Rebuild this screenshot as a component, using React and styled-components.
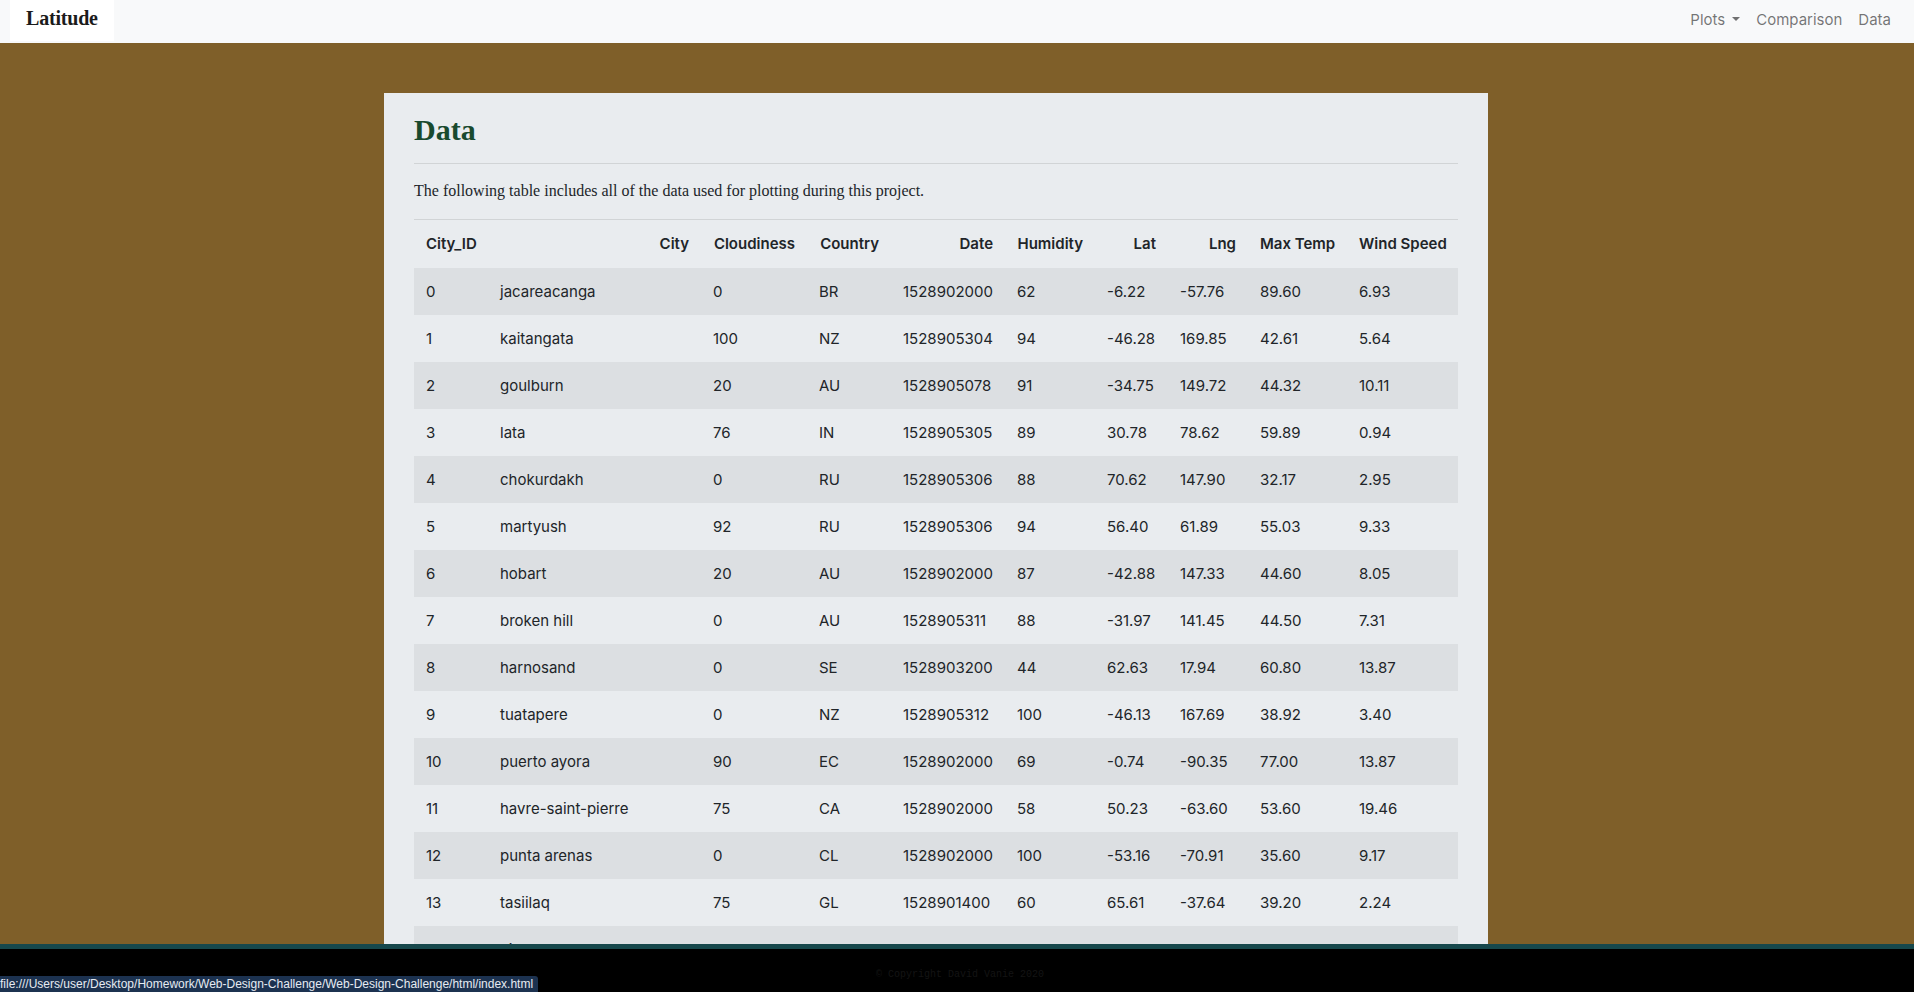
import React from 'react';
import styled, { createGlobalStyle } from 'styled-components';

const GlobalStyle = createGlobalStyle`
    html, body {
        margin: 0;
        padding: 0;
    }
    body {
        background: #7f5f29;
        font-family: Inter, "Noto Sans", sans-serif;
        color: #212529;
    }
`;

const Navbar = styled.nav`
    height: 43px;
    background: #f8f9fa;
    display: flex;
    align-items: stretch;
    justify-content: space-between;
    padding: 0 10px;
`;

const Brand = styled.a`
    display: flex;
    align-items: center;
    height: 41px;
    box-sizing: border-box;
    padding: 0 16px 4px;
    background: #ffffff;
    font-family: "Liberation Serif", serif;
    font-weight: bold;
    font-size: 20px;
    color: #1b1b1b;
    text-decoration: none;
    letter-spacing: -0.2px;
`;

const NavLinks = styled.ul`
    list-style: none;
    margin: 0;
    padding: 0 5px 5px 0;
    display: flex;
    align-items: center;
`;

const NavItem = styled.li`
    font-size: 15px;
    color: rgba(0, 0, 0, 0.55);
    padding: 0 8px;
    display: flex;
    align-items: center;
`;

const Caret = styled.span`
    display: inline-block;
    margin-left: 7px;
    border-top: 4.5px solid rgba(0, 0, 0, 0.55);
    border-left: 4px solid transparent;
    border-right: 4px solid transparent;
`;

const Main = styled.main`
    display: flex;
    justify-content: center;
    padding: 50px 42px 60px 0;
`;

const Jumbotron = styled.section`
    width: 1104px;
    box-sizing: border-box;
    background: #e9ecef;
    padding: 19px 30px 30px;
`;

const Heading = styled.h1`
    margin: 0;
    font-family: "Liberation Serif", serif;
    font-weight: bold;
    font-size: 30px;
    line-height: 36px;
    color: #194a2e;
`;

const Rule = styled.hr`
    margin: ${p => p.$top}px 0 0;
    border: 0;
    border-top: 1px solid rgba(0, 0, 0, 0.1);
`;

const Lead = styled.p`
    margin: 15px 0 16px;
    font-family: "Liberation Serif", serif;
    font-size: 16px;
    line-height: 24px;
`;

const Table = styled.table`
    width: 100%;
    table-layout: fixed;
    border-collapse: collapse;
    font-size: 15px;
`;

const Th = styled.th`
    text-align: ${p => (p.$left ? 'left' : 'right')};
    font-weight: 600;
    padding: 12px;
    line-height: 24px;
    white-space: nowrap;
`;

const Row = styled.tr`
    background: ${p => (p.$striped ? '#dcdfe2' : 'transparent')};
`;

const Td = styled.td`
    text-align: left;
    padding: 12px 12px 11px;
    line-height: 24px;
    white-space: nowrap;
`;

const Footer = styled.footer`
    position: fixed;
    left: 0;
    right: 0;
    bottom: 0;
    height: 43px;
    background: #000;
    border-top: 5px solid #17484c;
    display: flex;
    align-items: center;
    justify-content: center;
`;

const Copyright = styled.span`
    font-family: "Liberation Mono", monospace;
    font-size: 10px;
    color: #141414;
    margin-left: 6px;
    margin-top: 8px;
`;

const StatusBar = styled.div`
    position: fixed;
    left: 0;
    bottom: 0;
    height: 16px;
    padding: 0 5px 0 0;
    background: #1c3250;
    color: #e6ebf2;
    font-family: "Liberation Sans", Arial, sans-serif;
    font-size: 12px;
    line-height: 16px;
    border-top-right-radius: 3px;
`;

const widths = [74, 213, 106, 84, 114, 90, 73, 80, 99, 111];
const headers = ['City_ID', 'City', 'Cloudiness', 'Country', 'Date', 'Humidity', 'Lat', 'Lng', 'Max Temp', 'Wind Speed'];

const rows = [
    [0, 'jacareacanga', 0, 'BR', 1528902000, 62, '-6.22', '-57.76', '89.60', '6.93'],
    [1, 'kaitangata', 100, 'NZ', 1528905304, 94, '-46.28', '169.85', '42.61', '5.64'],
    [2, 'goulburn', 20, 'AU', 1528905078, 91, '-34.75', '149.72', '44.32', '10.11'],
    [3, 'lata', 76, 'IN', 1528905305, 89, '30.78', '78.62', '59.89', '0.94'],
    [4, 'chokurdakh', 0, 'RU', 1528905306, 88, '70.62', '147.90', '32.17', '2.95'],
    [5, 'martyush', 92, 'RU', 1528905306, 94, '56.40', '61.89', '55.03', '9.33'],
    [6, 'hobart', 20, 'AU', 1528902000, 87, '-42.88', '147.33', '44.60', '8.05'],
    [7, 'broken hill', 0, 'AU', 1528905311, 88, '-31.97', '141.45', '44.50', '7.31'],
    [8, 'harnosand', 0, 'SE', 1528903200, 44, '62.63', '17.94', '60.80', '13.87'],
    [9, 'tuatapere', 0, 'NZ', 1528905312, 100, '-46.13', '167.69', '38.92', '3.40'],
    [10, 'puerto ayora', 90, 'EC', 1528902000, 69, '-0.74', '-90.35', '77.00', '13.87'],
    [11, 'havre-saint-pierre', 75, 'CA', 1528902000, 58, '50.23', '-63.60', '53.60', '19.46'],
    [12, 'punta arenas', 0, 'CL', 1528902000, 100, '-53.16', '-70.91', '35.60', '9.17'],
    [13, 'tasiilaq', 75, 'GL', 1528901400, 60, '65.61', '-37.64', '39.20', '2.24'],
    [14, 'nikolskoye', 0, 'RU', 1528905316, 93, '59.70', '30.79', '53.60', '4.47'],
    [15, 'ushuaia', 75, 'AR', 1528902000, 80, '-54.81', '-68.31', '37.40', '11.41'],
    [16, 'rikitea', 24, 'PF', 1528905317, 100, '-23.12', '-134.97', '72.65', '12.66'],
];

const App = () => {
    return (
        <>
            <GlobalStyle />
            <Navbar>
                <Brand href="#">Latitude</Brand>
                <NavLinks>
                    <NavItem>Plots<Caret /></NavItem>
                    <NavItem>Comparison</NavItem>
                    <NavItem>Data</NavItem>
                </NavLinks>
            </Navbar>
            <Main>
                <Jumbotron>
                    <Heading>Data</Heading>
                    <Rule $top={15} />
                    <Lead>The following table includes all of the data used for plotting during this project.</Lead>
                    <Rule $top={0} />
                    <Table>
                        <colgroup>
                            {widths.map((w, i) => <col key={i} width={w} />)}
                        </colgroup>
                        <thead>
                            <tr>
                                {headers.map((h, i) => (
                                    <Th key={h} $left={i === 0}>{h}</Th>
                                ))}
                            </tr>
                        </thead>
                        <tbody>
                            {rows.map((r, i) => (
                                <Row key={i} $striped={i % 2 === 0}>
                                    {r.map((c, j) => <Td key={j}>{c}</Td>)}
                                </Row>
                            ))}
                        </tbody>
                    </Table>
                </Jumbotron>
            </Main>
            <Footer>
                <Copyright>© Copyright David Vanie 2020</Copyright>
            </Footer>
            <StatusBar>file:///Users/user/Desktop/Homework/Web-Design-Challenge/Web-Design-Challenge/html/index.html</StatusBar>
        </>
    );
};

export default App;
